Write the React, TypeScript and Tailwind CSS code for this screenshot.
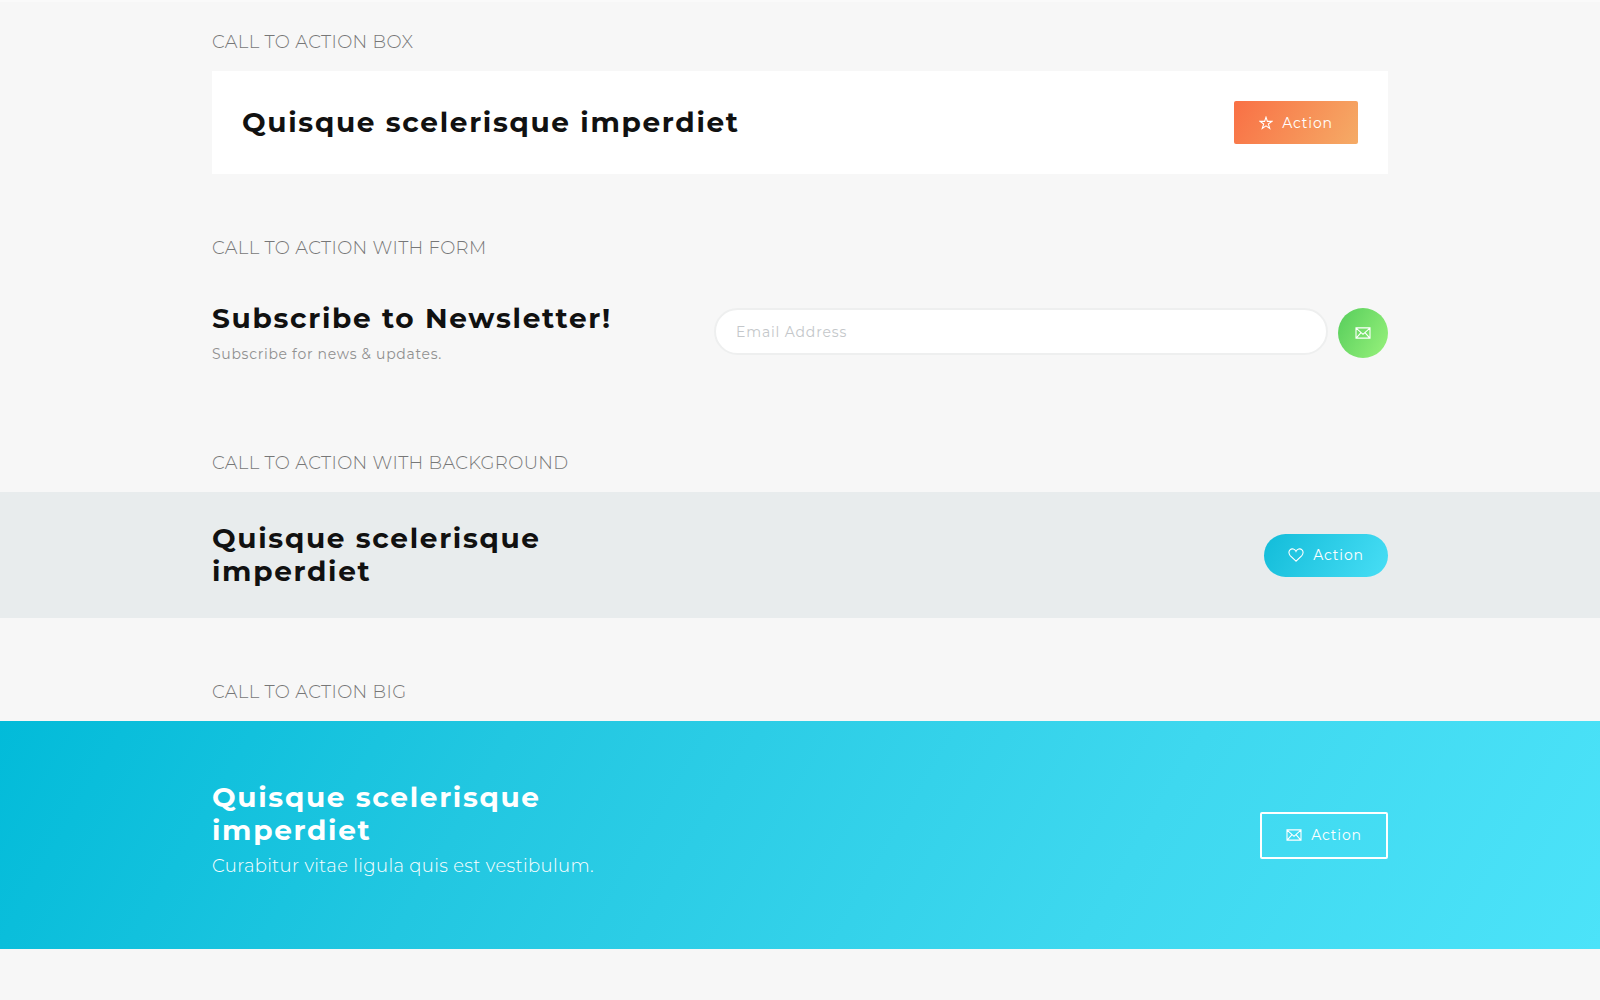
import type { ReactNode } from "react";

function Container({ children, className = "" }: { children: ReactNode; className?: string }) {
  return <div className={`mx-auto w-full max-w-[1176px] ${className}`}>{children}</div>;
}

function SectionLabel({ children }: { children: ReactNode }) {
  return (
    <Container className="pb-[15px]">
      <h2 className="text-lg leading-7 font-light tracking-[0.02em] uppercase text-[#777]">{children}</h2>
    </Container>
  );
}

function Title({ children, className = "" }: { children: ReactNode; className?: string }) {
  return <h3 className={`text-[28px] leading-[33px] font-bold tracking-[0.06em] ${className}`}>{children}</h3>;
}

function StarIcon() {
  return (
    <svg viewBox="0 0 14 14" className="size-[14px]" fill="none" stroke="currentColor" strokeWidth="1.1" aria-hidden="true">
      <path d="M7 1.2 8.4 5.4h4.5L9.3 8l1.4 4.4L7 9.8l-3.7 2.6L4.7 8 1.1 5.4h4.5z" />
    </svg>
  );
}

function HeartIcon() {
  return (
    <svg viewBox="0 0 16 14" className="h-[14px] w-4" fill="none" stroke="currentColor" strokeWidth="1.1" aria-hidden="true">
      <path d="M8 13.2 2.400 7.800C.7 6 .4 3.300 2 1.800 3.900.1 6.900.7 8 3.400 9.100.7 12.100.1 14 1.800c1.600 1.500 1.300 4.200-.4 6z" />
    </svg>
  );
}

function MailIcon() {
  return (
    <svg viewBox="0 0 16 12" className="h-3 w-4" fill="none" stroke="currentColor" strokeWidth="1.1" aria-hidden="true">
      <path d="M1 .9h14v10.200H1zM1.400 1.300 8 7.300l6.600-6M1.600 10.600l4.200-4.800M14.400 10.600l-4.200-4.800" />
    </svg>
  );
}

function ActionButton({ icon, className }: { icon: ReactNode; className: string }) {
  return (
    <button type="button" className={`flex shrink-0 items-center justify-center gap-[9px] text-sm leading-5 tracking-[0.06em] text-white ${className}`}>
      {icon}
      <span>Action</span>
    </button>
  );
}

export default function App() {
  return (
    <main className="min-h-screen border-t-2 border-[#fafafa] bg-[#f7f7f7] pt-[26px] pb-[50px] font-['Montserrat','Inter',sans-serif] text-[#111]">
      <section className="pb-[60px]">
        <SectionLabel>Call to action box</SectionLabel>
        <Container>
          <div className="flex items-center justify-between gap-8 bg-white p-[30px]">
            <Title>Quisque scelerisque imperdiet</Title>
            <ActionButton icon={<StarIcon />} className="h-[43px] w-[124px] rounded-xs bg-linear-[120deg,#f97045,#f5ab66]" />
          </div>
        </Container>
      </section>

      <section className="pb-[83px]">
        <SectionLabel>Call to action with form</SectionLabel>
        <Container className="flex items-start justify-between pt-[25px]">
          <div>
            <Title>Subscribe to Newsletter!</Title>
            <p className="pt-[7px] text-sm leading-6 tracking-wider text-[#909090]">Subscribe for news &amp; updates.</p>
          </div>
          <form className="flex w-[674px] items-start gap-[10px] pt-[6px]" onSubmit={(e) => e.preventDefault()}>
            <input
              type="email"
              aria-label="Email Address"
              placeholder="Email Address"
              className="h-[47px] min-w-0 flex-1 rounded-full border-2 border-[#eeefef] bg-white px-5 text-sm tracking-[0.06em] outline-none placeholder:text-[#c4c7ca]"
            />
            <button
              type="submit"
              aria-label="Subscribe"
              className="flex size-[50px] shrink-0 items-center justify-center rounded-full bg-linear-[120deg,#56cd5b,#98f27c] text-white"
            >
              <MailIcon />
            </button>
          </form>
        </Container>
      </section>

      <section className="pb-[60px]">
        <SectionLabel>Call to action with background</SectionLabel>
        <div className="bg-[#e8eced] py-[30px]">
          <Container className="flex items-center justify-between">
            <Title className="max-w-[380px]">Quisque scelerisque imperdiet</Title>
            <ActionButton icon={<HeartIcon />} className="h-[43px] w-[124px] rounded-full bg-linear-[120deg,#12bcd9,#48def5]" />
          </Container>
        </div>
      </section>

      <section>
        <SectionLabel>Call to action big</SectionLabel>
        <div className="bg-linear-[120deg,#02bbd9,#22c7e1_30%,#3ed8ef_70%,#4ce3f9] py-[60px] text-white">
          <Container className="flex items-center justify-between">
            <div className="pb-[9px]">
              <Title className="max-w-[380px]">Quisque scelerisque imperdiet</Title>
              <p className="pt-[5px] text-lg leading-7 font-light tracking-[0.02em]">Curabitur vitae ligula quis est vestibulum.</p>
            </div>
            <ActionButton icon={<MailIcon />} className="h-[47px] w-[128px] rounded-xs border-2 border-white" />
          </Container>
        </div>
      </section>
    </main>
  );
}
